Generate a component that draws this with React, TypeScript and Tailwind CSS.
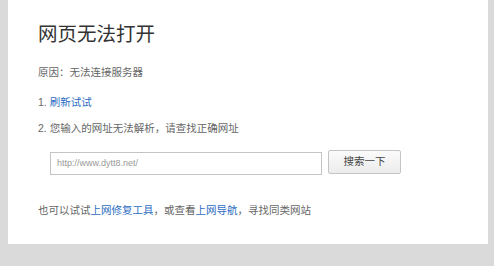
import React from "react";

export default function App() {
  const font = { fontFamily: '"Liberation Sans", "Noto Sans CJK SC", sans-serif' };
  return (
    <div className="w-[494px] h-[266px] bg-[#dadada] overflow-hidden" style={font}>
      <div className="ml-[8px] w-[480px] h-[244px] bg-white pl-[30px] pt-[20px] flex flex-col">
        <div className="text-[19.5px] leading-[28px] text-[#333333]">网页无法打开</div>
        <div className="mt-[16px] text-[10.5px] leading-[16px] text-[#666666]">原因：无法连接服务器</div>
        <div className="mt-[14px] text-[10.5px] leading-[16px] text-[#666666]">
          1. <a className="text-[#2d6dc4]">刷新试试</a>
        </div>
        <div className="mt-[10px] text-[10.5px] leading-[16px] text-[#666666]">
          2. 您输入的网址无法解析，请查找正确网址
        </div>
        <div className="mt-[14px] flex items-start">
          <div className="ml-[12px] mt-[2px] w-[272px] h-[23px] border border-[#c4c4c4] flex items-center pl-[6px] text-[9px] text-[#999999]">
            http://www.dytt8.net/
          </div>
          <div className="ml-[6px] w-[73px] h-[24px] border border-[#c4c4c4] rounded-[2px] bg-gradient-to-b from-[#fbfbfb] to-[#ececec] flex items-center justify-center text-[10.5px] text-[#444444]">
            搜索一下
          </div>
        </div>
        <div className="mt-[27px] text-[10.5px] leading-[16px] text-[#666666]">
          也可以试试<a className="text-[#2d6dc4]">上网修复工具</a>，或查看<a className="text-[#2d6dc4]">上网导航</a>，寻找同类网站
        </div>
      </div>
    </div>
  );
}
